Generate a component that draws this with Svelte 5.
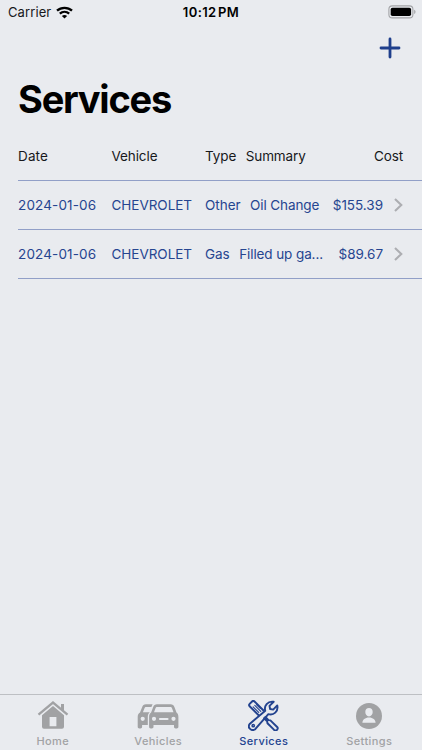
<script>
	const services = [
		{ date: '2024-01-06', vehicle: 'CHEVROLET', type: 'Other', summary: 'Oil Change', cost: '$155.39' },
		{ date: '2024-01-06', vehicle: 'CHEVROLET', type: 'Gas', summary: 'Filled up ga...', cost: '$89.67' }
	];

	const tabs = ['Home', 'Vehicles', 'Services', 'Settings'];
	let active = $state('Services');
</script>

<div class="screen">
	<header class="status">
		<div class="carrier">
			<span>Carrier</span>
			<svg width="17" height="13" viewBox="0 0 17 13" fill="none" stroke="#000" stroke-width="2.3">
				<path d="M1 4.7C5.2.8 11.8.8 16 4.7" />
				<path d="M3.8 7.7c2.7-2.4 6.7-2.4 9.4 0" />
				<path d="M8.5 12.6 5.9 9.9c1.5-1.3 3.7-1.3 5.2 0z" fill="#000" stroke="none" />
			</svg>
		</div>
		<span class="time">10:12&#8202;PM</span>
		<div class="battery">
			<svg width="28" height="14" viewBox="0 0 28 14">
				<rect x=".9" y=".9" width="24" height="12" rx="3.4" fill="none" stroke="#a3a4a7" stroke-width="1.1" />
				<rect x="2.7" y="2.7" width="20.4" height="8.4" rx="1.8" fill="#000" />
				<path d="M26.2 4.8c1.8.6 1.8 3.6 0 4.2z" fill="#a3a4a7" />
			</svg>
		</div>
	</header>

	<div class="toolbar">
		<button aria-label="Add service">
			<svg width="22" height="22" viewBox="0 0 22 22" stroke="#1f3f8c" stroke-width="2.8" stroke-linecap="round">
				<path d="M11 2v18M2 11h18" />
			</svg>
		</button>
	</div>

	<h1>Services</h1>

	<div class="list">
		<div class="row head">
			<span class="date">Date</span>
			<span class="vehicle">Vehicle</span>
			<span class="type">Type</span>
			<span class="summary">Summary</span>
			<span class="cost">Cost</span>
		</div>
		{#each services as service}
			<div class="row">
				<span class="date">{service.date}</span>
				<span class="vehicle">{service.vehicle}</span>
				<span class="type">{service.type}</span>
				<span class="summary">{service.summary}</span>
				<span class="cost">{service.cost}</span>
				<svg class="chevron" width="9" height="14" viewBox="0 0 9 14" fill="none" stroke="#adaeb2" stroke-width="2.1">
					<path d="M1 .9 7.3 7 1 13.1" />
				</svg>
			</div>
		{/each}
	</div>

	<nav>
		{#each tabs as tab}
			<button class="tab" class:active={active === tab} onclick={() => (active = tab)}>
				<div class="icon">
					{#if tab === 'Home'}
						<svg width="32" height="30" viewBox="0 0 32 30">
							<path d="M1.5 13.7 16 1.5l14.5 12.2" fill="none" stroke="currentColor" stroke-width="2.3" />
							<path d="M24 3h3v7.3l-3-2.6z" fill="currentColor" />
							<path fill="currentColor" fill-rule="evenodd" d="M16 4.9 27 14.2V25.7a2 2 0 0 1-2 2H7a2 2 0 0 1-2-2V14.2zM12.6 16v9.300h6.800V16z" />
						</svg>
					{:else if tab === 'Vehicles'}
						<svg width="42" height="30" viewBox="0 0 42 30">
							<path fill="currentColor" fill-rule="evenodd" d="M15.6 3.3H9C6.8 3.3 5.8 4.4 5 6.4L3 11.6C1.5 12.5.7 13.9.7 16v9.8c0 1 .7 1.7 1.7 1.7h1c1 0 1.700-.7 1.700-1.700V24h5.700v-8c0-2 .6-3.500 1.900-4.700H5.900l1.600-4C7.800 6.400 8.300 6 9.100 6h5.300zM5.700 15.700a2.100 2.100 0 1 1 0 4.200 2.100 2.100 0 0 1 0-4.200z" />
							<path fill="currentColor" fill-rule="evenodd" d="M20 3.3h13.6c2 0 3.1.9 3.9 2.900l2 5.400c1.200.9 1.900 2.400 1.900 4.400v9.800c0 1-.7 1.700-1.700 1.700h-1c-1 0-1.700-.7-1.700-1.700V24H16.500v1.800c0 1-.7 1.700-1.700 1.700h-1c-1 0-1.700-.7-1.700-1.700V16c0-2 .7-3.500 2-4.400l2-5.400C16.9 4.200 18 3.300 20 3.300zM20.200 6c-.9 0-1.400.3-1.700 1.200l-1.500 4.100h19.500L35 7.200C34.7 6.300 34.200 6 33.300 6zM17 15.700a2.100 2.100 0 1 0 0 4.200 2.100 2.100 0 0 0 0-4.200zM36.500 15.700a2.100 2.100 0 1 0 0 4.200 2.100 2.100 0 0 0 0-4.200zM23 16.900a1.100 1.100 0 0 0 0 2.200h7.500a1.100 1.100 0 0 0 0-2.200z" />
						</svg>
					{:else if tab === 'Services'}
						<svg width="31" height="31" viewBox="0 0 32 32" fill="none" stroke="currentColor" stroke-width="2" stroke-linejoin="round" stroke-linecap="round">
							<path d="m11 15.800-9.300-9.300a1.800 1.800 0 0 1 0-2.500l2.500-2.500a1.800 1.800 0 0 1 2.500 0l9.300 9.300" />
							<path d="m5.300 7 5.800 5.800M7 5.500l6.200 6.200M8.700 4.700l4 4" stroke-width="1.1" />
							<path d="m18 17.600 3.200 3.200 1.900.2 7 6.800a2.200 2.200 0 0 1-3.100 3.100l-6.900-6.900-.3-1.900-3.200-3.200" />
							<path d="M2 24.500 17.800 11C16.300 6 20.300.8 26.500 1.800L22.200 6.100l.6 3.200 3.200.6 4.200-4.300c1.400 6.300-3.800 10.600-9.200 9L7.700 29.900C3.900 33-1.400 28.400 2 24.500z" />
							<circle cx="5.400" cy="26.500" r="1.200" stroke-width="1.5" />
						</svg>
					{:else}
						<svg width="28" height="28" viewBox="0 0 28 28">
							<circle cx="14" cy="14" r="13" fill="currentColor" />
							<path fill="#e9ebef" d="M14 6.100c2.300 0 3.700 1.600 3.700 3.900s-1.500 4.400-3.700 4.400-3.700-2.100-3.700-4.400 1.400-3.900 3.700-3.900zM7.400 20.800c0-3 2.700-5.300 6.600-5.300s6.600 2.300 6.600 5.300z" />
						</svg>
					{/if}
				</div>
				<span>{tab}</span>
			</button>
		{/each}
	</nav>
</div>

<style>
	:global(body) {
		background: #e9ebef;
	}
	.screen {
		display: flex;
		flex-direction: column;
		height: 750px;
		background: #e9ebef;
		color: #17181b;
		font-family: Inter, 'Liberation Sans', sans-serif;
	}
	button {
		border: 0;
		padding: 0;
		background: none;
		font: inherit;
		color: inherit;
		cursor: pointer;
	}
	svg {
		display: block;
		flex: none;
	}

	.status {
		display: grid;
		grid-template-columns: 1fr auto 1fr;
		align-items: center;
		height: 24px;
		padding: 0 6px 0 8px;
		font-size: 13px;
	}
	.carrier {
		display: flex;
		align-items: center;
		gap: 5px;
		letter-spacing: 0.1px;
	}
	.time {
		font-weight: 600;
		letter-spacing: 0.4px;
		margin-right: 2px;
		color: #000;
	}
	.battery {
		justify-self: end;
	}

	.toolbar {
		display: flex;
		justify-content: flex-end;
		align-items: center;
		height: 47px;
		padding-right: 21px;
	}
	h1 {
		margin: 0;
		padding-left: 18px;
		height: 60px;
		line-height: 57px;
		font-size: 38px;
		font-weight: 700;
		letter-spacing: -1.25px;
		color: #000;
	}

	.row {
		display: flex;
		align-items: center;
		box-sizing: border-box;
		height: 49.3px;
		margin-left: 18px;
		padding: 1px 19px 0 0;
		border-bottom: 1px solid #919fc7;
		font-size: 13.5px;
		letter-spacing: -0.03px;
		white-space: nowrap;
		color: #264590;
	}
	.head {
		height: 49.5px;
		letter-spacing: -0.1px;
		color: #17181b;
	}
	.date {
		width: 93.5px;
		letter-spacing: 0.15px;
	}
	.vehicle {
		width: 93.5px;
	}
	.type {
		margin-right: 9.5px;
	}
	.summary {
		flex: 1;
		letter-spacing: -0.1px;
	}
	.chevron {
		margin-left: 11px;
	}

	nav {
		display: flex;
		box-sizing: border-box;
		height: 56px;
		margin-top: auto;
		border-top: 1px solid #bdbfc3;
	}
	.tab {
		flex: 1;
		display: flex;
		flex-direction: column;
		align-items: center;
		justify-content: space-between;
		padding: 5px 0 2px;
		font-size: 11px;
		font-weight: 500;
		letter-spacing: 0.4px;
		color: #a1a2a4;
	}
	.icon {
		display: flex;
		align-items: center;
		height: 31px;
	}
	.tab span {
		line-height: 14px;
	}
	.active {
		color: #23438f;
	}
</style>
